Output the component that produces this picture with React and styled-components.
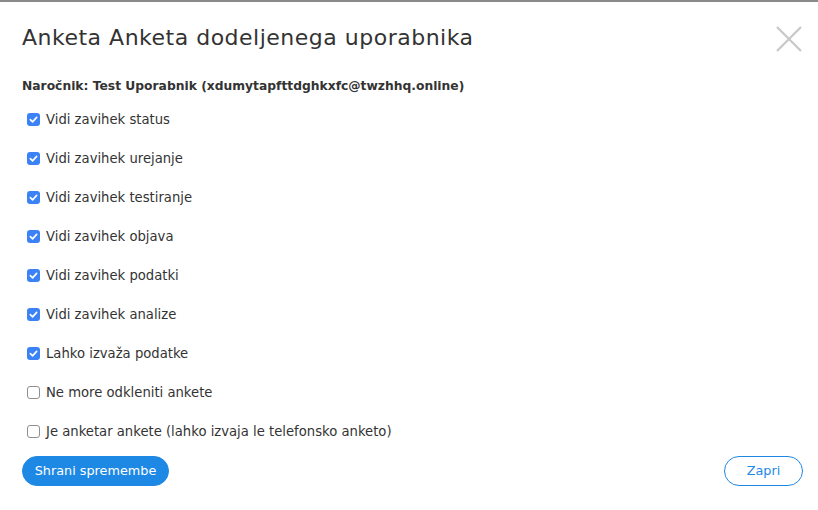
import React from "react";
import styled, { createGlobalStyle } from "styled-components";

const Global = createGlobalStyle`
  html, body { margin: 0; padding: 0; background: #fff; }
  body { font-family: "DejaVu Sans", "Noto Sans", sans-serif; color: #333; }
`;

const Modal = styled.div`
  width: 818px;
  height: 510px;
  box-sizing: border-box;
  border-top: 2px solid #8a8a8a;
  padding: 20px 15px 0 22px;
  display: flex;
  flex-direction: column;
`;

const Header = styled.div`
  display: flex;
  justify-content: space-between;
  align-items: flex-start;
`;

const Title = styled.h1`
  margin: 0;
  font-size: 22px;
  font-weight: 400;
  line-height: 32px;
  color: #333;
  letter-spacing: 0.5px;
`;

const Close = styled.button`
  border: 0;
  background: none;
  padding: 0;
  margin-top: 3px;
  width: 28px;
  height: 28px;
  cursor: pointer;
`;

const Client = styled.div`
  margin-top: 23px;
  font-size: 12.3px;
  font-weight: 700;
  color: #333;
  line-height: 18px;
`;

const List = styled.div`
  margin-top: 15px;
  display: flex;
  flex-direction: column;
  gap: 21.1px;
`;

const Row = styled.label`
  display: flex;
  align-items: center;
  gap: 6px;
  height: 18px;
  font-size: 13.2px;
  color: #333;
  padding-left: 5px;
`;

const Box = styled.span`
  width: 13px;
  height: 13px;
  box-sizing: border-box;
  border-radius: 3px;
  display: inline-flex;
  align-items: center;
  justify-content: center;
  background: ${(p) => (p.$checked ? "#3b82f6" : "#fff")};
  border: ${(p) => (p.$checked ? "none" : "1px solid #8f8f8f")};
`;

const Footer = styled.div`
  margin-top: 15px;
  display: flex;
  justify-content: space-between;
`;

const Primary = styled.button`
  height: 30px;
  padding: 0;
  border-radius: 15px;
  border: 1px solid #1e88e5;
  background: #1e88e5;
  color: #fff;
  font-family: inherit;
  font-size: 12.8px;
  white-space: nowrap;
  width: 147px;
`;

const Secondary = styled(Primary)`
  background: #fff;
  color: #1e88e5;
  width: 79px;
`;

const items = [
  ["Vidi zavihek status", true],
  ["Vidi zavihek urejanje", true],
  ["Vidi zavihek testiranje", true],
  ["Vidi zavihek objava", true],
  ["Vidi zavihek podatki", true],
  ["Vidi zavihek analize", true],
  ["Lahko izvaža podatke", true],
  ["Ne more odkleniti ankete", false],
  ["Je anketar ankete (lahko izvaja le telefonsko anketo)", false],
];

export default function App() {
  return (
    <>
      <Global />
      <Modal>
        <Header>
          <Title>Anketa Anketa dodeljenega uporabnika</Title>
          <Close aria-label="Zapri">
            <svg width="28" height="28" viewBox="0 0 28 28">
              <path d="M2 2 L26 26 M26 2 L2 26" stroke="#c8c8c8" strokeWidth="2.2" />
            </svg>
          </Close>
        </Header>
        <Client>Naročnik: Test Uporabnik (xdumytapfttdghkxfc@twzhhq.online)</Client>
        <List>
          {items.map(([t, c]) => (
            <Row key={t}>
              <Box $checked={c}>
                {c && (
                  <svg width="9" height="9" viewBox="0 0 10 10">
                    <path d="M1.5 5.2 L4 7.6 L8.5 2.6" fill="none" stroke="#fff" strokeWidth="1.8" strokeLinecap="round" strokeLinejoin="round" />
                  </svg>
                )}
              </Box>
              {t}
            </Row>
          ))}
        </List>
        <Footer>
          <Primary>Shrani spremembe</Primary>
          <Secondary>Zapri</Secondary>
        </Footer>
      </Modal>
    </>
  );
}
